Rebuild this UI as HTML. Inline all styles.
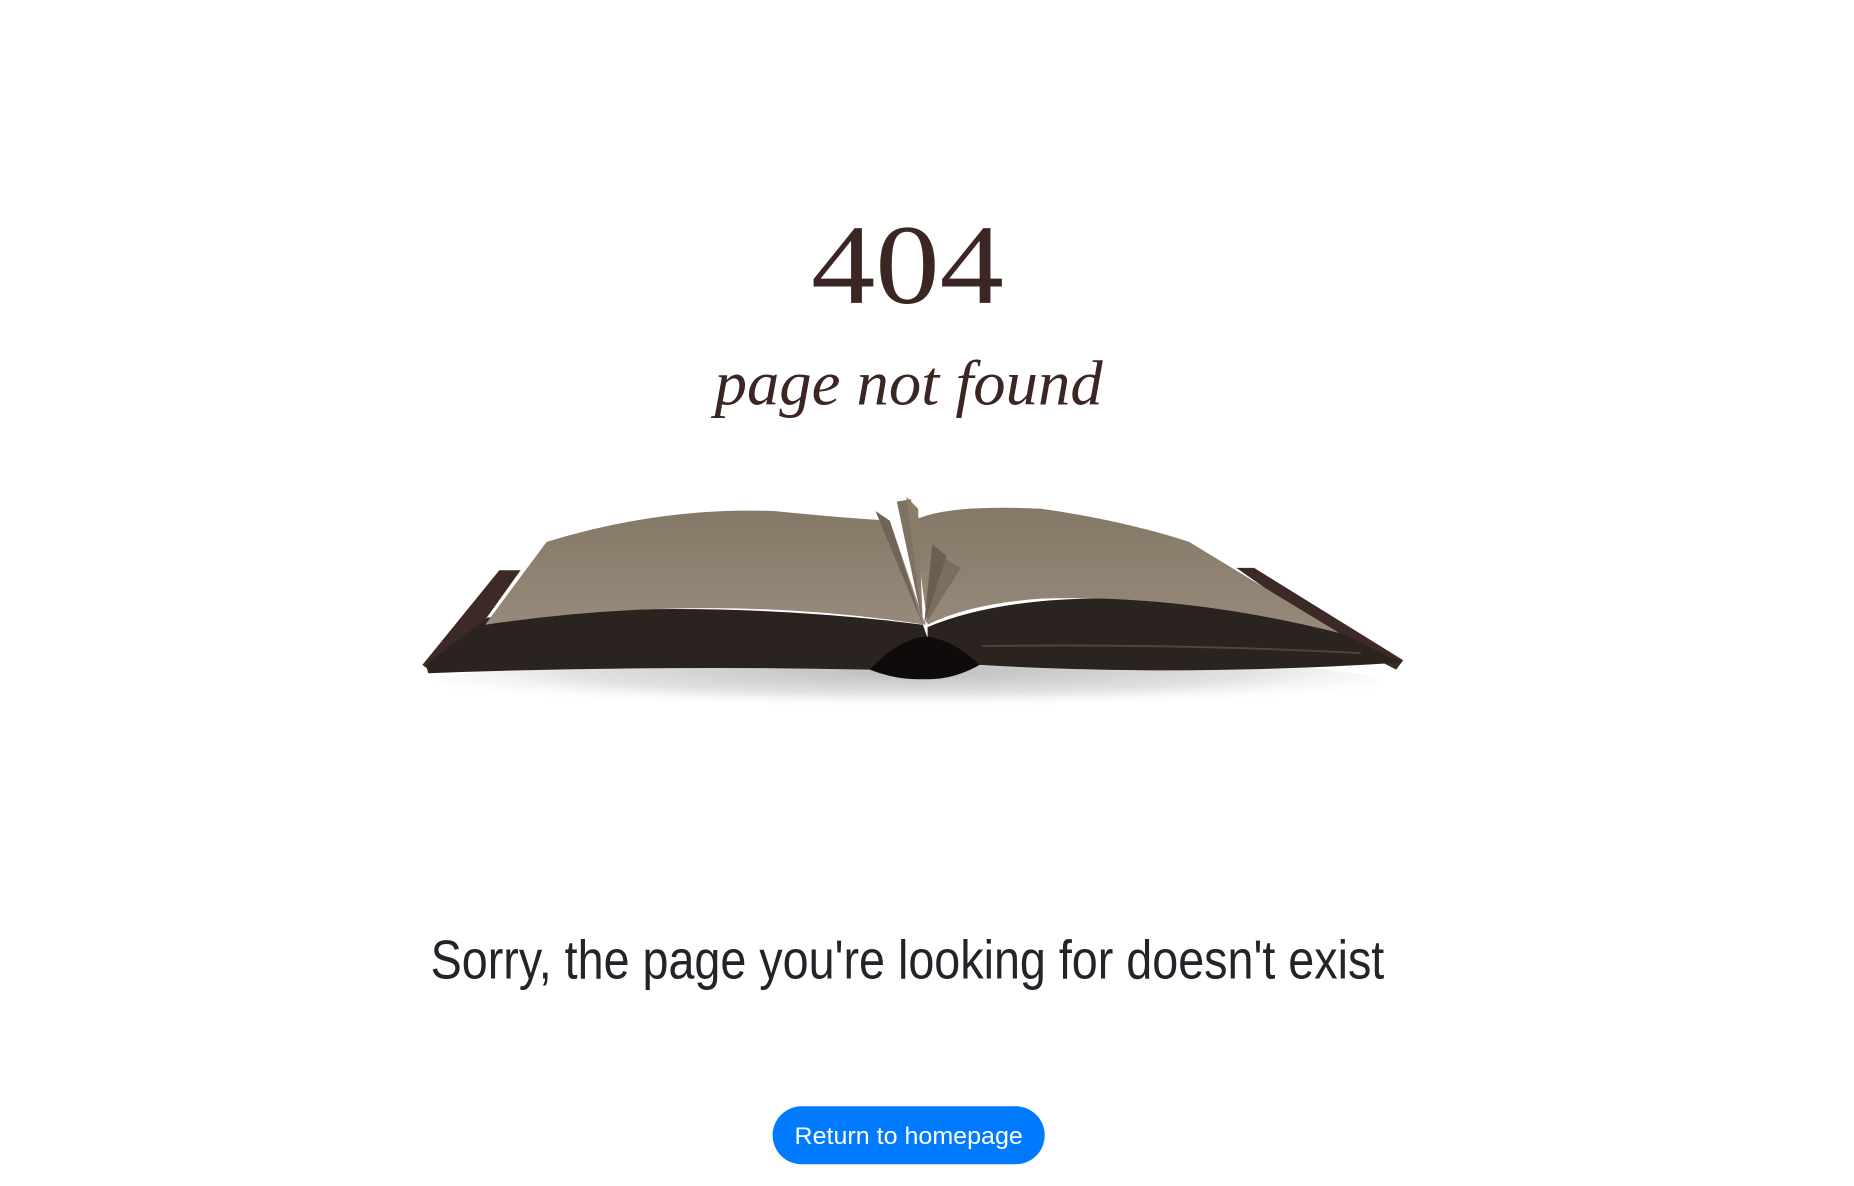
<!DOCTYPE html>
<html><head><meta charset="utf-8"><style>
html,body{margin:0;padding:0;background:#fff;width:1854px;height:1186px;overflow:hidden}
svg{display:block}
</style></head><body>
<svg width="1854" height="1186" viewBox="0 0 1567 1002.4" xmlns="http://www.w3.org/2000/svg">
<defs>
<radialGradient id="sh" cx="0.5" cy="0.3" r="0.6">
<stop offset="0" stop-color="#bdbdbd"/><stop offset="0.6" stop-color="#e2e2e2"/><stop offset="1" stop-color="#fff" stop-opacity="0"/>
</radialGradient>
<linearGradient id="pg" x1="0" y1="0" x2="0" y2="1"><stop offset="0" stop-color="#857867"/><stop offset="1" stop-color="#978a7a"/></linearGradient>
</defs>
<text x="767" y="256" text-anchor="middle" font-family="'Liberation Serif',serif" font-size="96" fill="#3b2623" textLength="163" lengthAdjust="spacingAndGlyphs">404</text>
<text x="768" y="342" text-anchor="middle" font-family="'Liberation Serif',serif" font-style="italic" font-size="54" fill="#3b2623" textLength="328" lengthAdjust="spacingAndGlyphs">page not found</text>
<ellipse cx="770" cy="578" rx="400" ry="26" fill="url(#sh)"/>
<path d="M357,562 L422,482 L440,482 L395,545 L365,568 Z" fill="#3d2a27"/>
<path d="M360,562 L412,522 Q600,505 780,528 L786,545 Q758,548 735,566 Q550,562 362,569 Z" fill="#2a2320"/>
<path d="M1045,480 L1060,480 L1186,558 L1180,566 L1130,540 Z" fill="#3d2a27"/>
<path d="M784,530 Q860,498 1000,508 Q1100,522 1135,536 L1184,560 Q1000,572 828,562 Q805,548 784,545 Z" fill="#2a2320"/>
<path d="M830,546 Q1000,544 1150,552" stroke="#5a4438" stroke-width="1.5" fill="none"/>
<path d="M410,528 L462,458 Q560,428 655,432 Q715,438 752,440 L782,528 Q600,500 410,528 Z" fill="url(#pg)"/>
<path d="M784,528 L772,440 Q800,426 880,430 Q950,440 1005,458 L1132,535 Q1000,502 880,506 Q820,510 784,528 Z" fill="url(#pg)"/>
<path d="M780,528 L740,432 L752,440 Z" fill="#6f6455"/>
<path d="M780,528 L758,424 L770,422 Z" fill="#7e7262"/>
<path d="M780,528 L766,420 L776,430 Z" fill="#8a7d6c"/>
<path d="M782,528 L795,470 L812,480 Z" fill="#7a6e5e"/>
<path d="M781,528 L788,460 L800,470 Z" fill="#6a5f52"/>
<path d="M735,566 Q760,540 782,538 Q805,540 828,562 Q805,575 782,574 Q758,575 735,566 Z" fill="#0e0b0a"/>
<text x="767" y="827" text-anchor="middle" font-family="'Liberation Sans',sans-serif" font-size="46" fill="#212529" textLength="806" lengthAdjust="spacingAndGlyphs">Sorry, the page you're looking for doesn't exist</text>
<rect x="653" y="935" width="230" height="49" rx="24.5" fill="#007bff"/>
<text x="768" y="967" text-anchor="middle" font-family="'Liberation Sans',sans-serif" font-size="20" fill="#fff" textLength="193" lengthAdjust="spacingAndGlyphs">Return to homepage</text>
</svg>
</body></html>
